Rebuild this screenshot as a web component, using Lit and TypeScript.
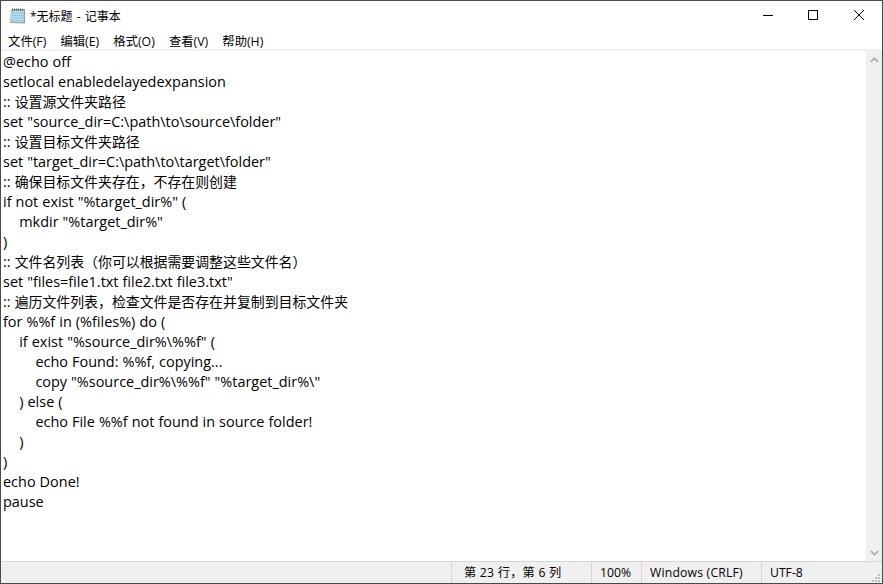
import { LitElement, html, css } from "lit";
import { customElement } from "lit/decorators.js";

const LINES = [
  "@echo off",
  "setlocal enabledelayedexpansion",
  ":: 设置源文件夹路径",
  'set "source_dir=C:\\path\\to\\source\\folder"',
  ":: 设置目标文件夹路径",
  'set "target_dir=C:\\path\\to\\target\\folder"',
  ":: 确保目标文件夹存在，不存在则创建",
  'if not exist "%target_dir%" (',
  '    mkdir "%target_dir%"',
  ")",
  ":: 文件名列表（你可以根据需要调整这些文件名）",
  'set "files=file1.txt file2.txt file3.txt"',
  ":: 遍历文件列表，检查文件是否存在并复制到目标文件夹",
  "for %%f in (%files%) do (",
  '    if exist "%source_dir%\\%%f" (',
  "        echo Found: %%f, copying...",
  '        copy "%source_dir%\\%%f" "%target_dir%\\"',
  "    ) else (",
  "        echo File %%f not found in source folder!",
  "    )",
  ")",
  "echo Done!",
  "pause",
];

const MENUS = ["文件(F)", "编辑(E)", "格式(O)", "查看(V)", "帮助(H)"];

function renderLine(line: string) {
  const parts = line.split(/([\u3000-\u9fff\uff00-\uffef]+)/);
  return parts.map((p, i) => (i % 2 ? html`<span class="cjk">${p}</span>` : p));
}

@customElement("app-root")
export class AppRoot extends LitElement {
  static styles = css`
    :host {
      display: block;
      width: 883px;
      height: 584px;
      font-family: "Open Sans", "Noto Sans CJK SC", sans-serif;
    }
    .window {
      box-sizing: border-box;
      width: 883px;
      height: 584px;
      border: 1px solid #4a4a4a;
      background: #fff;
      display: flex;
      flex-direction: column;
      overflow: hidden;
      position: relative;
    }
    .title {
      height: 30px;
      flex: none;
      display: flex;
      align-items: center;
      font-size: 12px;
      color: #000;
    }
    .app-icon {
      margin: 0 4px 0 8px;
      flex: none;
    }
    .title-text {
      flex: 1;
      word-spacing: 1px;
    }
    .ctl {
      width: 46px;
      height: 28px;
      flex: none;
      align-self: flex-start;
      display: flex;
      align-items: center;
      justify-content: center;
    }
    .ctl.min {
      width: 44px;
    }
    .menu {
      height: 18px;
      flex: none;
      display: flex;
      font-size: 12.3px;
      line-height: 21px;
      color: #000;
    }
    .menu span {
      padding: 0 7.100px;
      white-space: nowrap;
    }
    .rule {
      height: 2px;
      flex: none;
      background: #f0f0f0;
    }
    .body {
      flex: 1;
      min-height: 0;
      display: flex;
    }
    .text {
      flex: 1;
      min-width: 0;
      padding: 1px 0 0 2px;
      font-size: 14.45px;
      line-height: 20px;
      word-spacing: 0.3px;
      color: #000;
      white-space: pre;
    }
    .cjk {
      font-size: 13.9px;
    }
    .scroll {
      width: 16px;
      flex: none;
      background: #f0f0f0;
      display: flex;
      flex-direction: column;
      justify-content: space-between;
    }
    .arrow {
      height: 17px;
      display: flex;
      align-items: center;
      justify-content: center;
    }
    .status {
      height: 21px;
      flex: none;
      border-top: 1px solid #d7d7d7;
      background: #f0f0f0;
      display: flex;
      font-size: 12.2px;
      line-height: 21px;
      color: #000;
      position: relative;
    }
    .spacer {
      flex: 1;
    }
    .cell {
      box-sizing: border-box;
      border-left: 1px solid #d7d7d7;
      white-space: pre;
    }
    .pos {
      width: 140px;
      padding-left: 12px;
      letter-spacing: 0.25px;
    }
    .zoom {
      width: 50px;
      padding-left: 8px;
    }
    .eol {
      width: 120px;
      padding-left: 8px;
      letter-spacing: 0.2px;
    }
    .enc {
      width: 121px;
      padding-left: 8px;
    }
    .grip {
      position: absolute;
      right: 2px;
      bottom: 1px;
    }
    .peek {
      position: absolute;
      left: 0;
      bottom: -1px;
      width: 18px;
      height: 1px;
      background: #0f4a78;
    }
  `;

  render() {
    return html`<div class="window">
      <div class="title">
        <svg class="app-icon" width="17" height="17" viewBox="0 0 17 17">
          <path d="M3 1h13v14.500L1.500 15z" fill="#b59868" />
          <path d="M2.500 2h12.500v12.500L1 14z" fill="#b4dcf0" stroke="#7fa9c4" stroke-width=".6" />
          <path d="M3 5h11M3 7.500h11M2.500 10h11.500M2.500 12.500h11.500" stroke="#8fbdd8" stroke-width=".7" />
          <path d="M3.500 .5v2.500M5.500 .5v2.500M7.500 .5v2.500M9.500 .5v2.500M11.500 .5v2.500M13.500 .5v2.500" stroke="#555" stroke-width=".8" />
        </svg>
        <span class="title-text">*无标题 - 记事本</span>
        <div class="ctl min">
          <svg width="10" height="10" viewBox="0 0 10 10"><path d="M0 5.500h10" stroke="#000" /></svg>
        </div>
        <div class="ctl">
          <svg width="10" height="10" viewBox="0 0 10 10"><rect x=".5" y=".5" width="9" height="9" fill="none" stroke="#000" /></svg>
        </div>
        <div class="ctl">
          <svg width="10" height="10" viewBox="0 0 10 10"><path d="M0 0l10 10M10 0L0 10" stroke="#000" stroke-width="1" /></svg>
        </div>
      </div>
      <div class="menu">${MENUS.map((m) => html`<span>${m}</span>`)}</div>
      <div class="rule"></div>
      <div class="body">
        <div class="text">${LINES.map((l) => html`<div>${renderLine(l)}</div>`)}</div>
        <div class="scroll">
          <div class="arrow">
            <svg width="9" height="6" viewBox="0 0 9 6"><path d="M.8 5L4.500 1.300 8.200 5" fill="none" stroke="#a3a3a3" stroke-width="1.600" /></svg>
          </div>
          <div class="arrow">
            <svg width="9" height="6" viewBox="0 0 9 6"><path d="M.8 1L4.500 4.700 8.200 1" fill="none" stroke="#a3a3a3" stroke-width="1.600" /></svg>
          </div>
        </div>
      </div>
      <div class="status">
        <div class="spacer"></div>
        <div class="cell pos">第 23 行，第 6 列</div>
        <div class="cell zoom">100%</div>
        <div class="cell eol">Windows (CRLF)</div>
        <div class="cell enc">UTF-8</div>
        <svg class="grip" width="8" height="8" viewBox="0 0 8 8" fill="#bdbdbd">
          <rect x="6" y="0" width="2" height="2" /><rect x="3" y="3" width="2" height="2" /><rect x="6" y="3" width="2" height="2" />
          <rect x="0" y="6" width="2" height="2" /><rect x="3" y="6" width="2" height="2" /><rect x="6" y="6" width="2" height="2" />
        </svg>
      </div>
      <div class="peek"></div>
    </div>`;
  }
}
